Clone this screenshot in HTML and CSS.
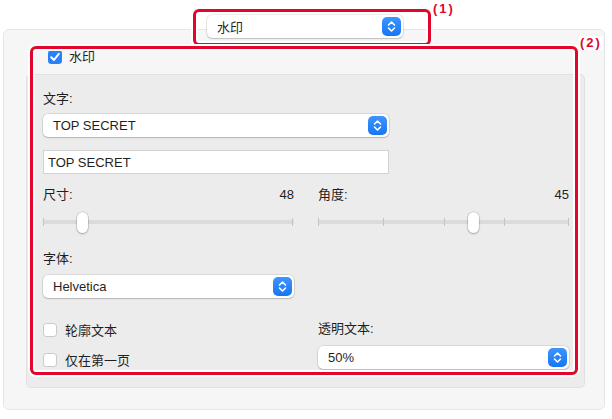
FILE: index.html
```html
<!DOCTYPE html>
<html lang="zh">
<head>
    <meta charset="UTF-8">
    <meta name="viewport" content="width=device-width, initial-scale=1.0">
    <title>水印</title>
    <link rel="stylesheet" href="styles.css">
</head>
<body>

<div class="page">
    <!-- Bovenste keuzemenu -->
    <div class="top">
        <div class="popup">
            <span>水印</span>
            <span class="stepper"><svg width="19" height="19" viewBox="0 0 19 19"><path d="M6.5 8 L9.5 5 L12.5 8 M6.5 11 L9.5 14 L12.5 11" fill="none" stroke="#fff" stroke-width="1.6" stroke-linecap="round" stroke-linejoin="round"/></svg></span>
        </div>
    </div>

    <div class="panel">
        <div class="group-head">
            <span class="check on"><svg width="14" height="14" viewBox="0 0 14 14"><path d="M3.2 7.2 L6 10 L10.8 3.8" fill="none" stroke="#fff" stroke-width="2" stroke-linecap="round" stroke-linejoin="round"/></svg></span>
            <span class="head-text">水印</span>
        </div>

        <div class="group">
            <div class="label">文字:</div>
            <div class="popup wide gap6">
                <span>TOP SECRET</span>
                <span class="stepper"><svg width="19" height="19" viewBox="0 0 19 19"><path d="M6.5 8 L9.5 5 L12.5 8 M6.5 11 L9.5 14 L12.5 11" fill="none" stroke="#fff" stroke-width="1.6" stroke-linecap="round" stroke-linejoin="round"/></svg></span>
            </div>
            <div class="field">TOP SECRET</div>

            <div class="columns">
                <div class="col">
                    <div class="label row"><span>尺寸:</span><span>48</span></div>
                    <div class="slider">
                        <div class="track"></div>
                        <span class="tick" style="left:0"></span>
                        <span class="tick" style="left:249px"></span>
                        <span class="knob" style="left:34px"></span>
                    </div>
                    <div class="label font-label">字体:</div>
                    <div class="popup gap7">
                        <span>Helvetica</span>
                        <span class="stepper"><svg width="19" height="19" viewBox="0 0 19 19"><path d="M6.5 8 L9.5 5 L12.5 8 M6.5 11 L9.5 14 L12.5 11" fill="none" stroke="#fff" stroke-width="1.6" stroke-linecap="round" stroke-linejoin="round"/></svg></span>
                    </div>
                </div>
                <div class="col">
                    <div class="label row"><span>角度:</span><span>45</span></div>
                    <div class="slider">
                        <div class="track"></div>
                        <span class="tick" style="left:0"></span>
                        <span class="tick" style="left:65px"></span>
                        <span class="tick" style="left:126px"></span>
                        <span class="tick" style="left:186px"></span>
                        <span class="tick" style="left:250px"></span>
                        <span class="knob" style="left:150px"></span>
                    </div>
                </div>
            </div>

            <div class="columns bottom">
                <div class="col">
                    <label class="option"><span class="check"></span>轮廓文本</label>
                    <label class="option second"><span class="check"></span>仅在第一页</label>
                </div>
                <div class="col">
                    <div class="label">透明文本:</div>
                    <div class="popup gap8">
                        <span>50%</span>
                        <span class="stepper"><svg width="19" height="19" viewBox="0 0 19 19"><path d="M6.5 8 L9.5 5 L12.5 8 M6.5 11 L9.5 14 L12.5 11" fill="none" stroke="#fff" stroke-width="1.6" stroke-linecap="round" stroke-linejoin="round"/></svg></span>
                    </div>
                </div>
            </div>
        </div>
    </div>

    <!-- Rode markeringen -->
    <div class="mark mark-1"></div>
    <div class="mark mark-2"></div>
    <div class="tag tag-1">(1)</div>
    <div class="tag tag-2">(2)</div>
</div>

</body>
</html>
```

FILE: styles.css
```css
body {
    margin: 0;
    background: #fff;
    color: #1f1f1f;
    font-family: "Liberation Sans", "Noto Sans CJK SC", sans-serif;
    font-size: 13px;
}
.page {
    position: relative;
    width: 612px;
    height: 419px;
    padding-top: 15px;
    box-sizing: border-box;
    overflow: hidden;
}
.top {
    position: relative;
    z-index: 1;
    margin-left: 207px;
    width: 196px;
}

/* Keuzemenu's */
.popup {
    display: flex;
    align-items: center;
    justify-content: space-between;
    height: 23px;
    padding: 0 2px 0 10px;
    background: #fff;
    border-radius: 5px;
    box-shadow: 0 0 0 0.5px rgba(0, 0, 0, 0.16), 0 1px 1.5px rgba(0, 0, 0, 0.16);
    box-sizing: border-box;
}
.popup.wide {
    width: 346px;
}
.gap6 { margin-top: 6px; }
.gap7 { margin-top: 7px; }
.gap8 { margin-top: 8px; }
.stepper {
    display: block;
    width: 19px;
    height: 19px;
    border-radius: 5px;
    background: linear-gradient(#3d95ff, #1676f3);
}
.stepper svg {
    display: block;
}

.panel {
    margin: -9px 0 0 3px;
    width: 602px;
    height: 381px;
    padding: 20px 19px 0 22px;
    box-sizing: border-box;
    background: #f6f6f6;
    border: 1px solid #e6e6e6;
    border-radius: 6px;
}
.group-head {
    display: flex;
    align-items: flex-start;
    gap: 7px;
    height: 24px;
    padding-left: 22px;
}
.head-text {
    line-height: 16px;
    margin-top: -1px;
}
.group {
    height: 314px;
    padding: 15px 15px 0 16px;
    box-sizing: border-box;
    background: #ececec;
    border: 1px solid #e1e1e1;
    border-radius: 5px;
}
.label {
    height: 18px;
    line-height: 18px;
}
.label.row {
    display: flex;
    justify-content: space-between;
}
.field {
    margin-top: 13px;
    width: 346px;
    height: 24px;
    line-height: 23px;
    padding-left: 4px;
    background: #fff;
    border: 1px solid #d3d3d3;
    box-sizing: border-box;
}
.columns {
    display: grid;
    grid-template-columns: 251px 251px;
    column-gap: 24px;
    margin-top: 12px;
}
.columns.bottom {
    margin-top: 22px;
}

/* Schuifregelaars */
.slider {
    position: relative;
    height: 30px;
    margin-top: 3px;
}
.track {
    position: absolute;
    left: 0;
    right: 0;
    top: 13px;
    height: 4px;
    border-radius: 2px;
    background: #dbdbdb;
}
.tick {
    position: absolute;
    top: 11px;
    width: 1px;
    height: 8px;
    background: #c4c4c4;
}
.knob {
    position: absolute;
    top: 5px;
    width: 11px;
    height: 21px;
    border-radius: 6px;
    background: #fff;
    box-shadow: 0 0 0 0.5px rgba(0, 0, 0, 0.2), 0 1px 2px rgba(0, 0, 0, 0.25);
}
.font-label {
    margin-top: 13px;
}

/* Vinkvakjes */
.check {
    display: inline-block;
    width: 14px;
    height: 14px;
    border-radius: 3.5px;
    background: #fff;
    box-shadow: inset 0 0 0 1px #cbcbcb;
    flex: none;
}
.check.on {
    background: #2a80f7;
    box-shadow: none;
}
.check svg {
    display: block;
}
.option {
    display: flex;
    align-items: center;
    gap: 8px;
    height: 18px;
}
.option .check {
    margin-top: 2px;
}
.option.second {
    margin-top: 12px;
}

/* Rode kaders */
.mark {
    position: absolute;
    border: 3px solid #e2062d;
    box-sizing: border-box;
    border-radius: 6px;
    box-shadow: 0 0 0 2px #fff, inset 0 0 0 2px #fff;
    z-index: 2;
}
.mark-1 {
    left: 193px;
    top: 9px;
    width: 238px;
    height: 37px;
}
.mark-2 {
    left: 30px;
    top: 46px;
    width: 548px;
    height: 329px;
}
.tag {
    position: absolute;
    z-index: 3;
    color: #e2062d;
    font-weight: bold;
    font-size: 13px;
    letter-spacing: 2px;
    line-height: 14px;
    padding: 0 1px;
    background: #fff;
}
.tag-1 {
    left: 432px;
    top: 2px;
}
.tag-2 {
    left: 579px;
    top: 36px;
}
```
